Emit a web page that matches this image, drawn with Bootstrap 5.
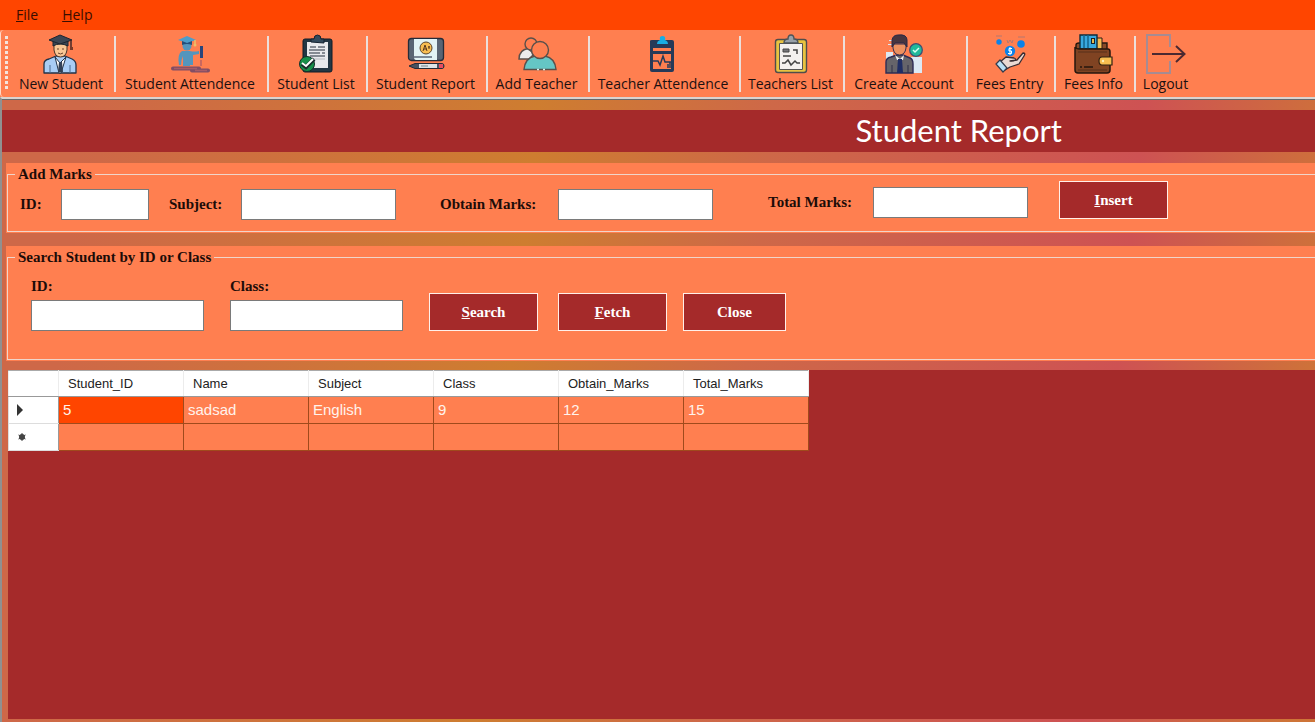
<!DOCTYPE html>
<html lang="en">
<head>
<meta charset="utf-8">
<meta name="viewport" content="width=device-width, initial-scale=1">
<title>Student Report</title>
<link href="https://cdn.jsdelivr.net/npm/bootstrap@5.3.0/dist/css/bootstrap.min.css" rel="stylesheet">
<style>
  :root { --coral: #ff7f50; --brown: #a52a2a; --hot: #ff4500; }
  body { font-family: "Segoe UI", "Open Sans", sans-serif; font-size: 14px; line-height: 20px; color: #1c1010; background: var(--coral); overflow-x: hidden; }
  .menu-strip { background: var(--hot); height: 30px; gap: 24px; padding-left: 16px; }
  .menu-strip a { color: #3a0d00; text-decoration: none; }
  .tool-strip { height: 67px; background: var(--coral); padding-left: 13px; grid-template-columns: 100px 153px 99px 120px 102px 151px 104px 123px 88px 80px 64px; position: relative; border-left: 1px solid #ffd9c9; border-radius: 4px 0 0 4px; }
  .tool-strip::before { content: ""; position: absolute; left: 4px; top: 6px; width: 3px; height: 54px; background: repeating-linear-gradient(#f3e4de 0 3px, transparent 3px 5px); }
  .tool { border: 0; background: none; color: inherit; padding: 4px 11px 0 8px; height: 62px; white-space: nowrap; display: flex; flex-direction: column; align-items: center; line-height: 20px; min-width: 0; }
  .tool svg { width: 40px; height: 40px; flex: none; }
  .tool-cell { border-left: 2px solid #ecdfdc; margin: 6px 0 5px; height: 56px; display: flex; justify-content: center; }
  .tool-cell:first-child { border-color: transparent; }
  .tool-cell:first-child .tool { padding-left: 3px; }
  .tool-cell .tool { margin-top: -6px; }
  .workspace { border-top: 2px solid #d9d3d0; border-left: 2px solid #909090; box-shadow: inset 0 1px #696969;
    background: linear-gradient(96deg, #ce6848 0%, #ce6848 6%, #ce7d30 39%, #ce6848 56%, #ce5253 83%, #ce7438 98%); padding-top: 11px; padding-bottom: 3px; }
  .title-bar { background: var(--brown); height: 42px; padding-left: 65%; color: #fff; }
  .title-bar h1 { font-family: Papyrus, Lato, sans-serif; font-weight: 400; font-size: 31px; line-height: 40px; margin: 0; white-space: nowrap; }
  .group { background: var(--coral); margin-left: 4px; padding: 1px 0 1px 1px; font-family: "Book Antiqua", "Liberation Serif", serif; font-weight: 700; font-size: 15px; color: #1c0c08; }
  .group-marks { margin-top: 11px; margin-bottom: 13px; }
  .group-search { margin-bottom: 9px; }
  .group fieldset { border: 1px solid #f0d5ca; border-right: 0; padding: 0; }
  .group legend { font-size: 15px; line-height: 20px; font-weight: 700; margin: 0 0 0 7px; padding: 0 3px; }
  .field { border: 1px solid #7a7a7a; border-radius: 0; height: 31px; padding: 2px 5px; min-height: 0; }
  .btn-brown { background: var(--brown); color: #fff; border: 1px solid #fff0ea; border-radius: 0; height: 38px; width: 109px; padding: 0; font-weight: 700; font-size: 15px; }
  .btn-brown:hover { background: #8b1f1f; color: #fff; }
  .btn-brown.slim { width: 103px; }
  .marks-row { display: grid; grid-template-columns: 41px 88px 20px 72px 155px 44px 118px 155px 55px 105px 155px 31px 109px; align-items: center; margin: -3px 0 4px 12px; height: 46px; }
  .marks-row label { white-space: nowrap; }
  .c-total { grid-column: 10; } .c-obtain { grid-column: 7; } .c-subject { grid-column: 4; } .c-insert { grid-column: 13; }
  .search-row { padding: 9px 0 28px 23px; gap: 26px; }
  .search-row .field { width: 173px; margin-top: 4px; }
  .grid-panel { background: var(--brown); margin-left: 6px; }
  .grid-panel table { table-layout: fixed; width: 800px; border-collapse: collapse; font-family: "Liberation Sans", Arial, sans-serif; }
  .grid-panel thead th { height: 26px; background: #fff; font-weight: 400; font-size: 13px; color: #222; padding: 0 9px; border: 1px solid #ececec; border-top-color: #aaa; border-bottom-color: #999; }
  .grid-panel tbody td { height: 27px; background: var(--coral); color: #fff3ec; font-size: 15px; padding: 0 4px; border: 1px solid #a04a1c; }
  .grid-panel tbody td.picked { background: var(--hot); }
  .grid-panel tbody th { background: #fff; padding: 0 8px; border: 1px solid #ddd; border-right-color: #999; }
  .grid-panel tbody svg { width: 10px; height: 12px; display: block; }
  .w-head { width: 50px; } .w-data { width: 125px; }
</style>
</head>
<body class="min-vh-100 d-flex flex-column">
<nav class="menu-strip d-flex align-items-center" aria-label="Menu">
  <a href="#"><u>F</u>ile</a>
  <a href="#"><u>H</u>elp</a>
</nav>

<div class="tool-strip d-grid" role="toolbar" aria-label="Main tools">
  <div class="tool-cell"><button class="tool" type="button">
    <svg viewBox="0 0 40 40" stroke-linejoin="round"><path d="M3 39V30Q3 26 8 25L15 22H24L31 25Q35 27 35 31V39Z" fill="#a9cdf5" stroke="#223247" stroke-width="1.3"/><path d="M14 23L19 29L25 23L20 39H18Z" fill="#fff" stroke="#223247"/><path d="M18 28H21L22 38H17Z" fill="#334156"/><path d="M9 31V39M29 31V39" stroke="#4c6c93"/><path d="M13 9V16Q14 23 19.500 23Q25 23 26 16V9Z" fill="#f8c795" stroke="#4a3428"/><path d="M16 15H18M21 15H23M17 19Q19.500 21 22 19" stroke="#6b432d" fill="none"/><path d="M12 7V12Q19 8 27 12V7Z" fill="#3b4654" stroke="#1c2530"/><path d="M8 6L19 1L31 6L19 10Z" fill="#3b4654" stroke="#1c2530"/><path d="M30 6V14" stroke="#452927" stroke-width="1.500"/><path d="M29 13H32V16H29Z" fill="#7a3a27"/></svg>
    New Student</button></div>
  <div class="tool-cell"><button class="tool" type="button">
    <svg viewBox="0 0 40 40"><path d="M9 31Q7 20 12 17H20Q24 18 29 17V20L23 21V31H20V24V32H13V22Q11 26 11 31Z" fill="#5495bd"/><circle cx="17" cy="12" r="4.500" fill="#5495bd"/><path d="M8 6L17 2L26 6L17 9Z" fill="#4d9dca"/><path d="M12 7V11Q17 9 22 11V7L17 9Z" fill="#234f7d"/><path d="M25 6V11" stroke="#edbf68" stroke-width="1.500"/><circle cx="25" cy="11" r="1.500" fill="#edbf68"/><path d="M31.500 12V24" stroke="#29457b" stroke-width="3"/><path d="M31 26V32" stroke="#b86065" stroke-width="1.500"/><path d="M3 34.500H29M22 36.500H38" stroke="#814e65" stroke-width="4" stroke-linecap="round"/><path d="M4 34.500H27M25 36.500H37" stroke="#a85d67" stroke-width="1.300"/></svg>
    Student Attendence</button></div>
  <div class="tool-cell"><button class="tool" type="button">
    <svg viewBox="0 0 40 40"><rect x="7" y="5" width="29" height="33" rx="2" fill="#243744" stroke="#111d26"/><path d="M11 8H32V34H11Z" fill="#e9eaed"/><path d="M15 8V5H18Q18 1 21.500 1Q25 1 25 5H28V9Z" fill="#334a5c" stroke="#142331"/><path d="M14 13H20M22 13H29M13 16H29M13 19H24M26 19H29M14 22H29" stroke="#656c76" stroke-width="1.500"/><path d="M16 25H29" stroke="#b8bbc0"/><circle cx="11" cy="30" r="7.500" fill="#17904a" stroke="#13312a"/><path d="M6 30L10 33L18 25" stroke="#182c2c" stroke-width="4" fill="none"/><path d="M6 29L10 32L17 25" stroke="#fff" stroke-width="2" fill="none"/></svg>
    Student List</button></div>
  <div class="tool-cell"><button class="tool" type="button">
    <svg viewBox="0 0 40 40"><rect x="2.500" y="4.500" width="35" height="22" rx="3" fill="#596574" stroke="#252b38" stroke-width="1.300"/><path d="M8 5H31V26H10Q8 26 8 23Z" fill="#e2f3f5"/><path d="M8 23H26" stroke="#435064" stroke-width="1.300"/><circle cx="20" cy="14" r="6" fill="#f7bd52" stroke="#59452d"/><path d="M17 17L19 11L21 17M18 15H21M22 13H24M23 12V15" stroke="#59391e" fill="none"/><path d="M3 32L9 29.500H36Q38 29.500 38 32Q38 34.500 36 34.500H9Z" fill="#485260" stroke="#252b38"/><path d="M13 30H31V34H13Z" fill="#dde4e8"/><path d="M33 30H37V34H33Z" fill="#e84c60"/><path d="M15 32H22" stroke="#79838d"/></svg>
    Student Report</button></div>
  <div class="tool-cell"><button class="tool" type="button">
    <svg viewBox="0 0 40 40" stroke="#59504b" stroke-width="1.400"><path d="M2 25Q2 16 11 14.500L17 20L12 25Z" fill="#ececec"/><circle cx="14" cy="10" r="6" fill="#ff7f50"/><path d="M7 35.500Q8 24 18 22H28Q38 24 39 35.500Z" fill="#65c6c5"/><circle cx="23" cy="16" r="8.500" fill="#ff7f50"/><path d="M20 35.500H22M26 35.500H28" stroke="#d8eeea"/></svg>
    Add Teacher</button></div>
  <div class="tool-cell"><button class="tool" type="button">
    <svg viewBox="0 0 40 40"><path d="M7 7Q7 6 9 6H29Q31 6 31 8V36Q31 38 29 38H9Q7 38 7 36Z" fill="#263a58"/><path d="M10 14H28V17H10ZM10 20H28V35H10Z" fill="#ff7f50"/><path d="M10 27H15L17 31L20 22L22 28H28M25 34V30M27 34V28" fill="none" stroke="#263a58" stroke-width="1.500"/><path d="M14 10Q14 7 17 6Q16 2 19.500 2Q23 2 22 6Q25 7 25 10Z" fill="#18aee4"/></svg>
    Teacher Attendence</button></div>
  <div class="tool-cell"><button class="tool" type="button">
    <svg viewBox="0 0 40 40"><rect x="4.500" y="5.500" width="31" height="33" rx="2.500" fill="#e8c340" stroke="#4f4d4b" stroke-width="1.400"/><path d="M8.500 9.500H31.500V35.500H8.500Z" fill="#f4f1ef" stroke="#555"/><path d="M13 9Q13 5 17 5Q17 1 20 1Q23 1 23 5Q27 5 27 9Z" fill="#98a1a9" stroke="#4c5358" stroke-width="1.400"/><path d="M12 15H18V18H12Z" fill="#77777a" stroke="#444"/><path d="M22 16H26V20M12 22H20M11 29H14L17 26L20 31L24 27L26 29H29" stroke="#444" stroke-width="1.500" fill="none"/></svg>
    Teachers List</button></div>
  <div class="tool-cell"><button class="tool" type="button">
    <svg viewBox="0 0 40 40"><path d="M2 18H9V39H2ZM27 23H38V39H27ZM5 6H8V7H5ZM4 10H8V11H4Z" fill="#dce9f4"/><path d="M2 39V28Q2 24 7 23L13 21H19L26 24Q29 25 29 30V39Z" fill="#66646a" stroke="#2e2c54" stroke-width="1.400"/><path d="M9 10V14Q10 21 15.500 21Q21 21 22 14V10Z" fill="#ed9160" stroke="#353052"/><path d="M8 13V6Q9 1 14 1Q23 0 23 6V13L20 9H11Z" fill="#48353f" stroke="#282946"/><path d="M11 21L16 25L20 21L19 26H13Z" fill="#eee"/><path d="M14 25H18L19 39H13Z" fill="#202e65"/><path d="M8 31V39M24 31V39" stroke="#303048"/><circle cx="32" cy="16" r="6.300" fill="#20b99b" stroke="#3f4e72" stroke-width="1.300"/><path d="M29 16L31 18L35 14" fill="none" stroke="#d6fff4" stroke-width="1.500"/></svg>
    Create Account</button></div>
  <div class="tool-cell"><button class="tool" type="button">
    <svg viewBox="0 0 40 40"><g fill="#0b82e8"><circle cx="9" cy="8" r="2.700"/><circle cx="31" cy="10" r="3.800"/><circle cx="20" cy="17" r="5.200"/></g><path d="M6 2H12M28 3H35M17 6L18 9L20 6L22 9L23 6" stroke="#b47970" fill="none"/><path d="M22 14.500H19V17H21.500V19.500H18M20 13V21" stroke="#fff" fill="none"/><path d="M10 28L16 23L24 24Q27 25 24 27H20L27 26L33 19Q36 19 34 22L29 30L20 33L15 36Z" fill="#ead9d3" stroke="#382c32" stroke-width="1.300" stroke-linejoin="round"/><path d="M6 30L10 26L17 34L13 38Z" fill="#b8dff5" stroke="#333b4c" stroke-width="1.200"/></svg>
    Fees Entry</button></div>
  <div class="tool-cell"><button class="tool" type="button">
    <svg viewBox="0 0 40 40"><path d="M3 15V11Q3 9 6 9H34V16Z" fill="#8a4a28" stroke="#26170e" stroke-width="1.400"/><path d="M22 4H29V15H22Z" fill="#f6bd54" stroke="#2c1b12"/><path d="M7 1H24V15H7Z" fill="#39a9df" stroke="#102b38" stroke-width="1.400"/><path d="M11 1V15M15 1V15" stroke="#14658d" stroke-width="1.500"/><path d="M18 4H22V10H18Z" fill="#182129"/><path d="M19 5H21V9H19Z" fill="#e5bd52"/><path d="M2 13Q3 15 6 15H35Q37 15 37 18V36Q37 39 34 39H5Q2 39 2 36Z" fill="#804322" stroke="#26170e" stroke-width="1.500"/><path d="M5 18H34M5 36H34" stroke="#56301b"/><path d="M7 33H9M11 33H20" stroke="#26170e" stroke-width="1.500"/><path d="M29 23H39V31H29Q26 31 26 27Q26 23 29 23Z" fill="#f7bd50" stroke="#302012" stroke-width="1.200"/><circle cx="30" cy="27" r="1.200" fill="#fff1bb"/></svg>
    Fees Info</button></div>
  <div class="tool-cell"><button class="tool" type="button">
    <svg viewBox="0 0 40 40" fill="none"><path d="M24 13V1H1V39H24V27" stroke="#a68b92" stroke-width="2"/><path d="M6 20H38M30 12L38.500 20L30 28" stroke="#4b2931" stroke-width="2"/></svg>
    Logout</button></div>
</div>

<main class="workspace flex-grow-1 d-flex flex-column">
  <header class="title-bar"><h1>Student Report</h1></header>

  <section class="group group-marks">
    <fieldset>
      <legend class="float-none w-auto">Add Marks</legend>
      <div class="marks-row">
        <label for="mark-id">ID:</label><input id="mark-id" class="form-control field" type="text">
        <label class="c-subject" for="mark-subject">Subject:</label><input id="mark-subject" class="form-control field" type="text">
        <label class="c-obtain" for="mark-obtain">Obtain Marks:</label><input id="mark-obtain" class="form-control field" type="text">
        <label class="c-total mb-1" for="mark-total">Total Marks:</label><input id="mark-total" class="form-control field mb-1" type="text">
        <button class="btn btn-brown c-insert mb-2" type="button"><u>I</u>nsert</button>
      </div>
    </fieldset>
  </section>

  <section class="group group-search">
    <fieldset>
      <legend class="float-none w-auto">Search Student by ID or Class</legend>
      <div class="search-row d-flex align-items-end">
        <div><label class="d-block" for="find-id">ID:</label><input id="find-id" class="form-control field" type="text"></div>
        <div><label class="d-block" for="find-class">Class:</label><input id="find-class" class="form-control field" type="text"></div>
        <div class="d-flex gap-3">
          <button class="btn btn-brown me-1" type="button"><u>S</u>earch</button>
          <button class="btn btn-brown" type="button"><u>F</u>etch</button>
          <button class="btn btn-brown slim" type="button">Close</button>
        </div>
      </div>
    </fieldset>
  </section>

  <section class="grid-panel flex-grow-1">
    <table>
      <colgroup><col class="w-head"><col span="6" class="w-data"></colgroup>
      <thead><tr><th aria-label="Row"></th><th>Student_ID</th><th>Name</th><th>Subject</th><th>Class</th><th>Obtain_Marks</th><th>Total_Marks</th></tr></thead>
      <tbody>
        <tr><th aria-label="Current row"><svg viewBox="0 0 10 12"><path d="M0 0L6 6L0 12Z" fill="#333"/></svg></th><td class="picked">5</td><td>sadsad</td><td>English</td><td>9</td><td>12</td><td>15</td></tr>
        <tr><th aria-label="New row"><svg viewBox="0 0 10 12"><circle cx="5" cy="6" r="3" fill="#444"/><path d="M5 2V10M1.500 4L8.500 8M1.500 8L8.500 4" stroke="#444"/></svg></th><td></td><td></td><td></td><td></td><td></td><td></td></tr>
      </tbody>
    </table>
  </section>
</main>
<script src="https://cdn.jsdelivr.net/npm/bootstrap@5.3.0/dist/js/bootstrap.bundle.min.js"></script>
</body>
</html>
